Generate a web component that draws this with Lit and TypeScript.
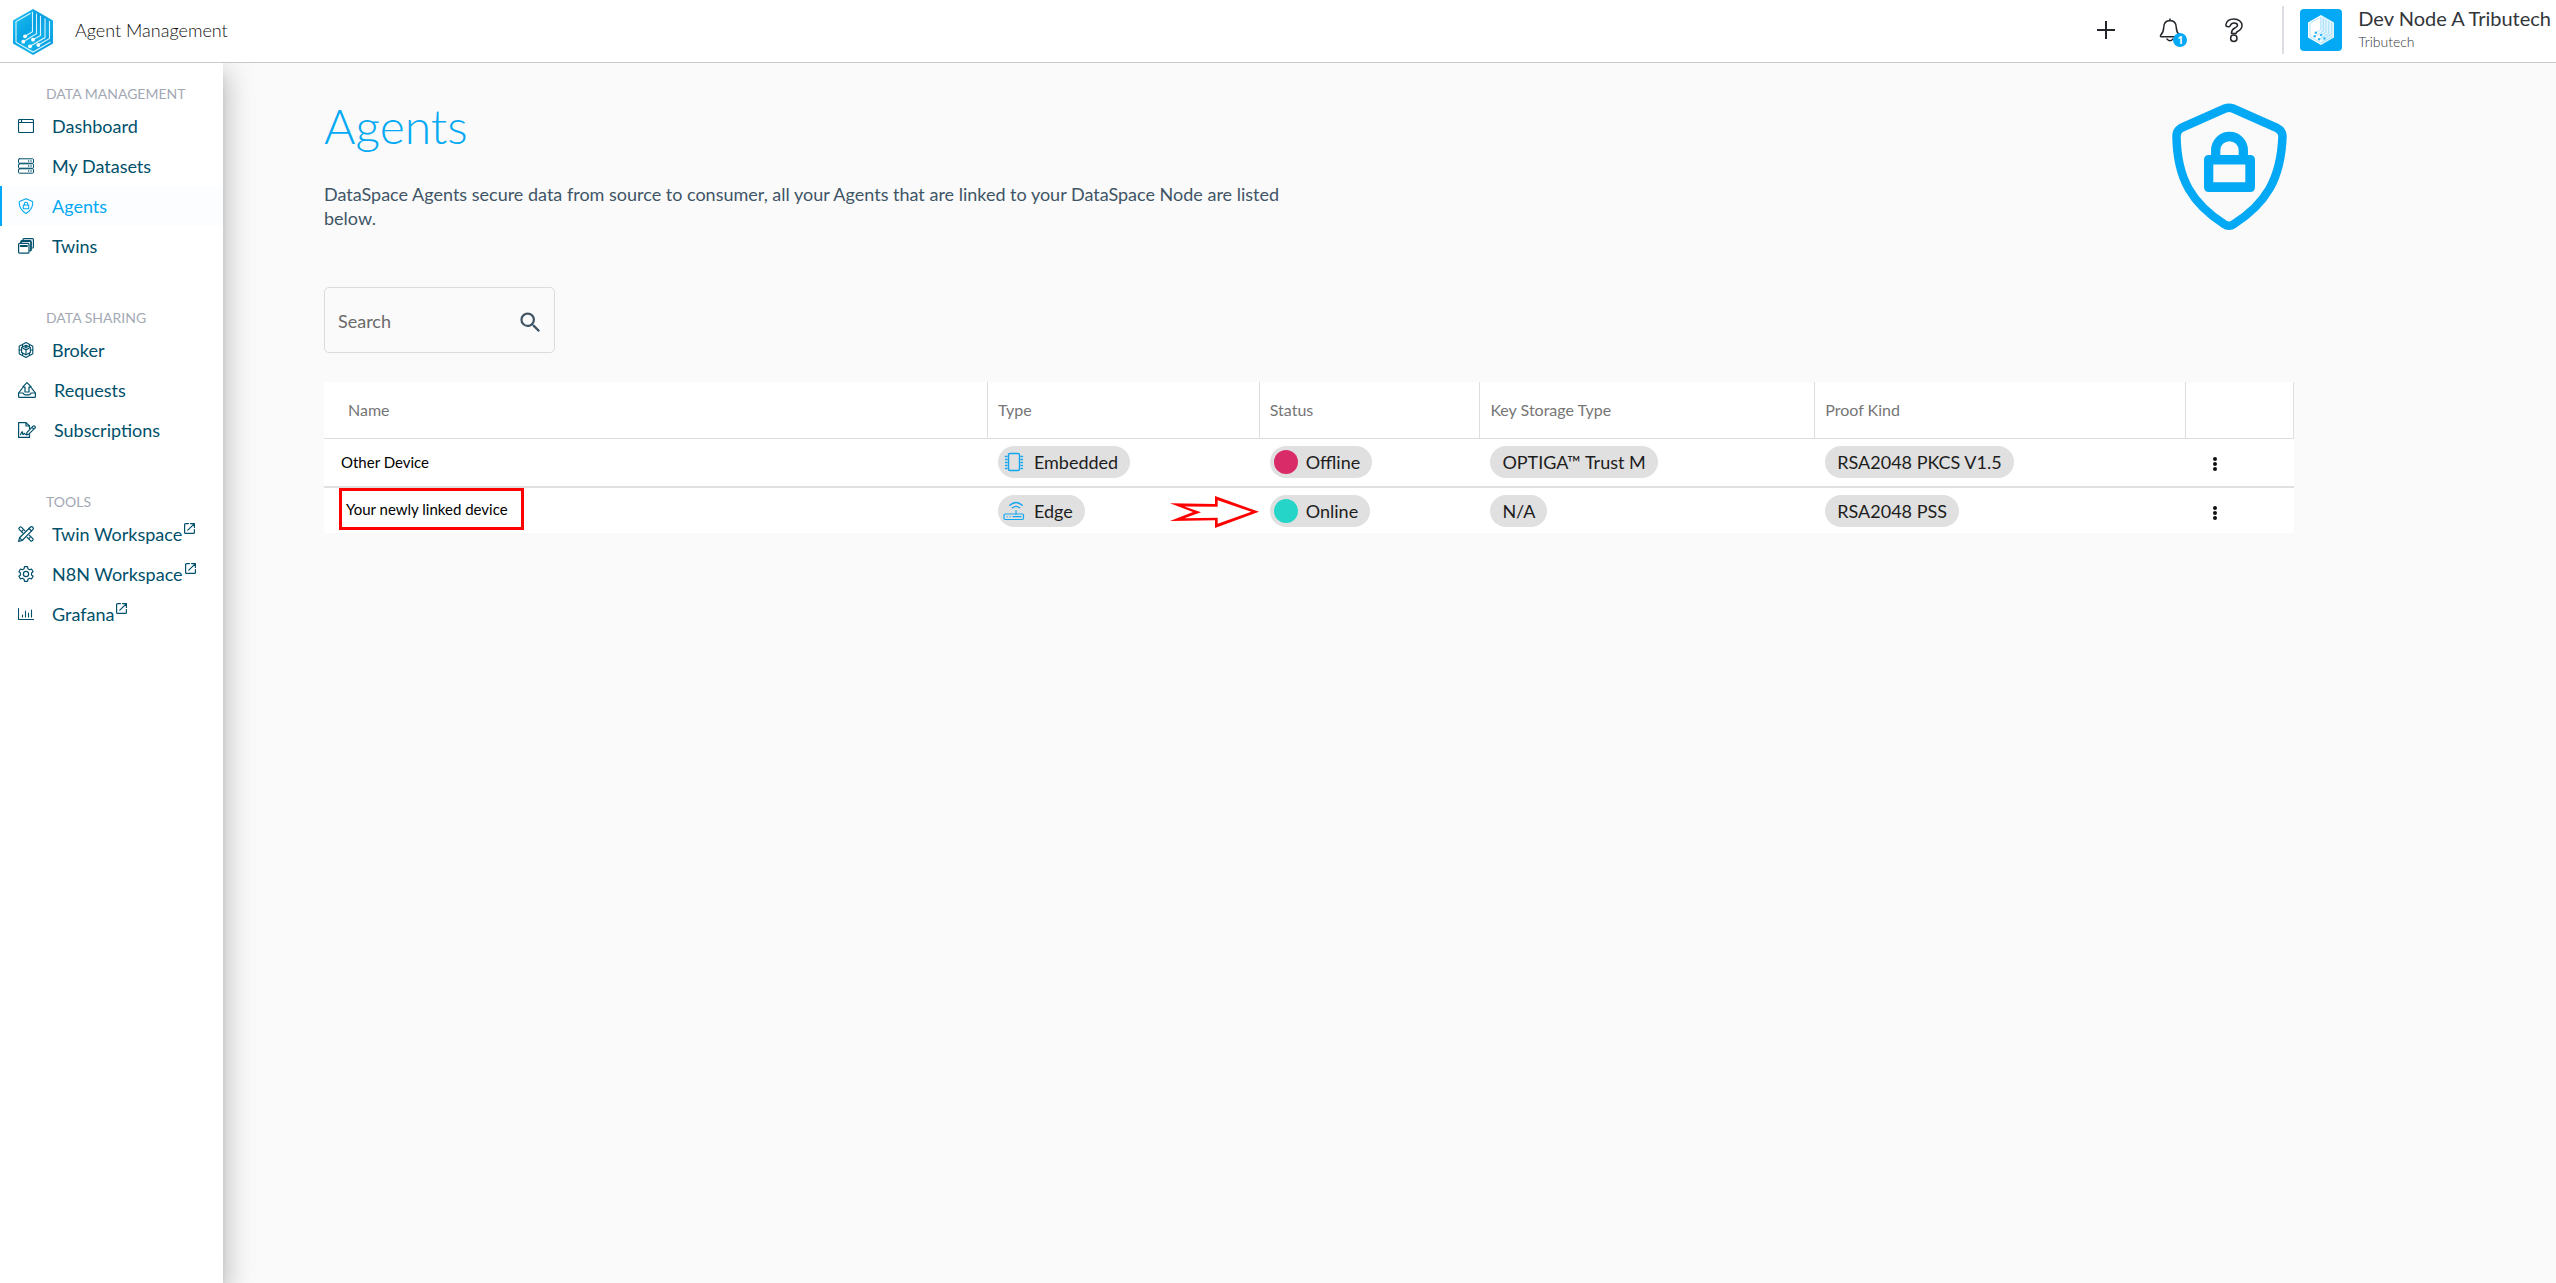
import { LitElement, html, svg, css, nothing, TemplateResult, SVGTemplateResult } from 'lit';
import { customElement, property } from 'lit/decorators.js';
import { classMap } from 'lit/directives/class-map.js';

/* ---------- icons ---------- */

const stroked = (w: number, h: number, body: SVGTemplateResult, sw = 1) => html`
  <svg width=${w} height=${h} viewBox="0 0 ${w} ${h}" fill="none" stroke="currentColor"
    stroke-width=${sw} stroke-linecap="round" stroke-linejoin="round" aria-hidden="true">${body}</svg>`;

const icons: Record<string, TemplateResult> = {
  dashboard: stroked(16, 16, svg`
    <rect x="0.5" y="1.5" width="15" height="13" rx="1"></rect>
    <path d="M0.5 4.5H15.5M3.5 2V4.5"></path>`, 1.2),
  datasets: stroked(16, 16, svg`
    <rect x="0.5" y="0.8" width="15" height="4.4" rx="0.8"></rect>
    <rect x="0.5" y="5.8" width="15" height="4.4" rx="0.8"></rect>
    <rect x="0.5" y="10.8" width="15" height="4.4" rx="0.8"></rect>
    <path d="M10.6 3h.1M13 3h.1M10.6 8h.1M13 8h.1M10.6 13h.1M13 13h.1" stroke-width="1.4"></path>`),
  agents: stroked(16, 16, svg`
    <path d="M8 .8L14 3.3Q14.8 3.7 14.8 4.6C14.7 9.6 12.5 13 8 15.4C3.5 13 1.3 9.6 1.2 4.6Q1.2 3.7 2 3.3Z"></path>
    <rect x="5.3" y="7" width="5.4" height="3.8" rx=".4"></rect>
    <path d="M6.3 7V6A1.7 1.7 0 0 1 9.7 6V7"></path>`, 1.1),
  twins: stroked(16, 16, svg`
    <path d="M5 2.5V1.6Q5 .6 6 .6H14.4Q15.4 .6 15.4 1.6V9Q15.4 10 14.4 10"></path>
    <path d="M3 4.6V4Q3 3 4 3H12Q13 3 13 4V11.5Q13 12.5 12.3 12.5" stroke-width="1.8"></path>
    <rect x=".6" y="5.4" width="10.4" height="9.8" rx="1"></rect>
    <path d="M2.6 8H9" stroke-width="1.8"></path>`, 1.2),
  broker: stroked(16, 16, svg`
    <path d="M8 .6L14.8 4.3V11.7L8 15.4L1.2 11.7V4.3Z"></path>
    <path d="M8 3.2L12.4 5.6V10.4L8 12.8L3.6 10.4V5.6Z"></path>
    <path d="M8 12.6V8L5 6.2M8 8L11 6.2M1.2 8H3.6M12.4 8H14.8M4.6 2.6V5M11.4 2.6V5M4.6 11V13.4M11.4 11V13.4"></path>
    <circle cx="8" cy="5" r="1"></circle>`, 1.1),
  requests: stroked(18, 16, svg`
    <path d="M9 .6L13.4 5.2H11V10H7V5.2H4.6Z"></path>
    <path d="M4.2 6.4L.6 11V14.4Q.6 15.4 1.6 15.4H16.4Q17.4 15.4 17.4 14.4V11L13.8 6.4"></path>
    <path d="M.8 11H5Q5.8 12.8 7 12.8H11Q12.2 12.8 13 11H17.2"></path>`, 1.2),
  subscriptions: stroked(18, 16, svg`
    <path d="M11.5 12.5V15.4H.6V.6H8L11.5 4V6.5"></path>
    <path d="M8 .8V4H11.3"></path>
    <path d="M2.6 12.6Q4 9 4.6 10Q4.4 12.8 5.4 12.4L6.4 11.4L7.4 12.4"></path>
    <path d="M8.4 12.8L9 10.4L15 4.2Q16 3.4 17 4.4Q17.8 5.4 16.8 6.2L10.8 12.2Z M14 5.3L15.9 7.2"></path>`, 1.2),
  tools: stroked(16, 16, svg`
    <path d="M.6 15.4L1.5 11.8L12.3 1.2Q13.5 .2 14.8 1.3Q15.9 2.6 14.8 3.7L4.2 14.5Z"></path>
    <path d="M1.6 11.8L4.2 14.4M11 2.5L13.5 5"></path>
    <path d="M6.8 4.7L3.3 1.2Q2.6 .5 1.9 1.2L1.2 1.9Q.5 2.6 1.2 3.3L4.7 6.8M11.3 9.2L14.8 12.7Q15.5 13.4 14.8 14.1L14.1 14.8Q13.4 15.5 12.7 14.8L9.2 11.3"></path>
    <path d="M3.7 5.5L5 4.2M10.8 12.6L12.2 11.2"></path>`, 1.2),
  gear: stroked(16, 16, svg`
    <circle cx="8" cy="8" r="2.6"></circle>
    <path d="M6.5 .7H9.5L9.9 2.7L11.6 3.7L13.5 3L15.1 5.7L13.5 7V9L15.1 10.3L13.5 13L11.6 12.3L9.9 13.3L9.5 15.3H6.5L6.1 13.3L4.4 12.3L2.5 13L.9 10.3L2.5 9V7L.9 5.7L2.5 3L4.4 3.7L6.1 2.7Z"></path>`, 1.2),
  chart: stroked(16, 16, svg`
    <path d="M.5 2.5V13.5H15.5M4.5 11V9M7.5 11V5M10.5 11V7M13.5 11V4"></path>`, 1.1),
  external: stroked(11, 11, svg`
    <path d="M4.5 .6H1.6Q.6 .6 .6 1.6V9.4Q.6 10.4 1.6 10.4H9.4Q10.4 10.4 10.4 9.4V6.5"></path>
    <path d="M6.5 .6H10.4V4.5M10.2 .8L3.8 7.2"></path>`, 1.2),
  plus: stroked(20, 20, svg`<path d="M10 1V19M1 10H19" stroke-linecap="butt"></path>`, 2),
  bell: stroked(22, 24, svg`
    <path d="M11 1V2.6M11 2.6C6.5 2.8 4.8 6 4.7 9.5C4.6 13.5 3.5 15.3 1.8 17Q.8 18.6 2.4 18.8H19.6Q21.2 18.6 20.2 17C18.5 15.3 17.4 13.5 17.3 9.5C17.2 6 15.5 2.8 11 2.6"></path>
    <path d="M8 21Q11 24.6 14 21"></path>`, 1.5),
  help: stroked(18, 25, svg`
    <path d="M2 8.6Q.6 8.2 .9 6.6C1.6 3.2 4.8 1 8.8 1C13.6 1 17 3.8 17 7.6C17 11 14.8 12.4 12.6 13.5Q11.2 14.2 11.1 15.4H6.5C6.4 12.6 7.4 11.2 9.8 10C11.6 9.1 12.5 8.7 12.5 7.5C12.5 6 11 5 9 5C7 5 6 6 5.5 7.3Q4.9 9 3.4 8.8Z"></path>
    <circle cx="8.8" cy="20.3" r="3.2"></circle>`, 1.5),
  search: html`<svg width="27" height="27" viewBox="0 0 24 24" fill="currentColor" aria-hidden="true">
    <path d="M15.5 14h-.79l-.28-.27A6.471 6.471 0 0 0 16 9.5 6.5 6.5 0 1 0 9.5 16c1.61 0 3.09-.59 4.23-1.57l.27.28v.79l5 4.99L20.49 19l-4.99-5zm-6 0C7.01 14 5 11.99 5 9.5S7.01 5 9.5 5 14 7.01 14 9.5 11.99 14 9.5 14z"></path></svg>`,
  more: html`<svg width="4" height="16" viewBox="0 0 4 16" fill="currentColor" aria-hidden="true">
    <circle cx="2" cy="3" r="2"></circle><circle cx="2" cy="8" r="2"></circle><circle cx="2" cy="13" r="2"></circle></svg>`,
  embedded: stroked(24, 24, svg`
    <rect x="6.5" y="3.5" width="11" height="17" rx="1.5"></rect>
    <path d="M3.5 6.5H5M3.5 9.5H5M3.5 12.5H5M3.5 15.5H5M3.5 18.5H5M19 6.5H20.5M19 9.5H20.5M19 12.5H20.5M19 15.5H20.5M19 18.5H20.5"></path>`, 1.4),
  edge: stroked(24, 24, svg`
    <rect x="2" y="15" width="19.5" height="5.5" rx="1.2"></rect>
    <path d="M14 15V11.5M5 17.7h.1M8 17.7h.1M11 17.7H19"></path>
    <path d="M7.8 6.2Q14 .8 20.2 6.2M10.4 8.8Q14 5.9 17.6 8.8" stroke-width="1.4"></path>`, 1.2),
  shield: html`<svg width="128" height="128" viewBox="0 0 128 128" fill="none" stroke="currentColor" aria-hidden="true">
    <path stroke-width="8.5" stroke-linejoin="round" d="M60 5.5Q64 3.8 68 5.5L112 25Q117.5 28 117.5 33C116 77 100 101 69 121Q64 124.5 59 121C28 101 12 77 11.5 33Q11.5 28 16 25Z"></path>
    <path stroke-width="9.3" d="M50.7 54V47.3A13.7 13.7 0 0 1 78.3 47.3V54"></path>
    <path stroke="none" fill="currentColor" fill-rule="evenodd" d="M44 52H85Q90 52 90 57V84Q90 89 85 89H44Q39 89 39 84V57Q39 52 44 52ZM48.3 61.5V79.2H80.3V61.5Z"></path></svg>`,
};

const cubeLines = svg`
  <path d="M17.5 4.2L3 12.6V33.2L20 43L37.6 33M19.5 2.8V22.8L12 27.3M23.5 4.5V24.6L10.3 32.7M27.5 6.8V26.4L20 30.7M32 9.4V28.6L17 37.3M36.5 12V29.5L25.3 36"></path>`;
const cubeDots = svg`
  <circle cx="12" cy="27.3" r="1.9"></circle><circle cx="10.3" cy="32.7" r="1.9"></circle>
  <circle cx="20" cy="30.7" r="1.9"></circle><circle cx="17" cy="37.3" r="1.9"></circle>
  <circle cx="25.3" cy="36" r="1.9"></circle>`;
const cube = (w: number, h: number, body: string, ink: string, dots: string, edge: string) => html`
  <svg width=${w} height=${h} viewBox="0 0 40 46" aria-hidden="true">
    <defs><linearGradient id="cube-fill" x1="0" y1="0" x2="1" y2="1">
      <stop offset="0" stop-color="#1fc4f2"></stop><stop offset=".4" stop-color="#08a5e6"></stop>
      <stop offset=".65" stop-color="#13b8ee"></stop><stop offset="1" stop-color="#0795dc"></stop>
    </linearGradient></defs>
    <path d="M20 0L40 11.5V34.5L20 46L0 34.5V11.5Z" fill=${body}></path>
    <path d="M20 0L40 11.5V34.5L20 46Z" fill=${edge}></path>
    <g fill="none" stroke=${ink} stroke-width="1.1" stroke-opacity=".85">${cubeLines}</g>
    <g fill=${dots}>${cubeDots}</g>
  </svg>`;

/* ---------- navigation ---------- */

interface NavItem { label: string; icon: string; active?: boolean; external?: boolean }
const sections: { title: string; items: NavItem[] }[] = [
  { title: 'DATA MANAGEMENT', items: [
    { label: 'Dashboard', icon: 'dashboard' },
    { label: 'My Datasets', icon: 'datasets' },
    { label: 'Agents', icon: 'agents', active: true },
    { label: 'Twins', icon: 'twins' },
  ] },
  { title: 'DATA SHARING', items: [
    { label: 'Broker', icon: 'broker' },
    { label: 'Requests', icon: 'requests' },
    { label: 'Subscriptions', icon: 'subscriptions' },
  ] },
  { title: 'TOOLS', items: [
    { label: 'Twin Workspace', icon: 'tools', external: true },
    { label: 'N8N Workspace', icon: 'gear', external: true },
    { label: 'Grafana', icon: 'chart', external: true },
  ] },
];

@customElement('side-nav')
export class SideNav extends LitElement {
  static styles = css`
    :host {
      display: block;
      background: #fff;
      box-shadow: 0 8px 10px -5px rgba(0, 0, 0, 0.2), 0 16px 24px 2px rgba(0, 0, 0, 0.14),
        0 6px 30px 5px rgba(0, 0, 0, 0.12);
    }
    .nav { display: flex; flex-direction: column; gap: 40px; padding-top: 19px; }
    .title {
      margin: 0; padding-left: 46px;
      font-size: 14px; font-weight: 400; line-height: 24px; color: #a3a9b4;
    }
    .list { margin: 0; padding: 0; list-style: none; }
    .item {
      display: flex; align-items: center; height: 40px; padding-left: 18px;
      font-size: 18px; color: #00506b; text-decoration: none;
    }
    .icon { display: flex; margin-right: 18px; }
    .active {
      padding-left: 16px; border-left: 2px solid #03a9f4;
      background: #fbfdff; color: #03a9f4;
    }
    .external { display: flex; align-self: flex-start; padding: 9px 0 0 2px; }
  `;
  render() {
    return html`<nav class="nav" aria-label="Main">
      ${sections.map((s) => html`<section>
        <h2 class="title">${s.title}</h2>
        <ul class="list">
          ${s.items.map((i) => html`<li>
            <a class=${classMap({ item: true, active: !!i.active })} href="#"
              aria-current=${i.active ? 'page' : nothing}>
              <span class="icon">${icons[i.icon]}</span>${i.label}
              ${i.external ? html`<span class="external">${icons.external}</span>` : nothing}
            </a></li>`)}
        </ul>
      </section>`)}
    </nav>`;
  }
}

/* ---------- header ---------- */

@customElement('top-bar')
export class TopBar extends LitElement {
  static styles = css`
    :host { display: block; background: #fff; border-bottom: 1px solid #c6c8ca; }
    .bar { display: flex; align-items: center; height: 62px; padding: 0 5px 0 13px; }
    .logo { display: flex; padding-top: 2px; }
    .title { margin: 0 auto 0 22px; padding-bottom: 2px; font-size: 18px; font-weight: 300; color: #111; }
    .side { display: flex; align-items: center; height: 48px; padding-bottom: 2px; }
    .action {
      position: relative; display: flex; align-items: center; justify-content: center;
      width: 40px; height: 40px; margin-right: 24px; padding: 0;
      border: 0; background: none; color: #23272b;
    }
    .badge {
      position: absolute; right: 3px; bottom: 3px; width: 14px; height: 14px;
      border-radius: 50%; background: #03a9f4; color: #fff;
      font: 700 10px/14px 'Open Sans', sans-serif; text-align: center;
    }
    .divider { width: 2px; height: 48px; margin: 0 16px 0 4px; background: #dddee5; }
    .avatar {
      display: flex; align-items: center; justify-content: center;
      width: 42px; height: 42px; margin-right: 16px; border-radius: 4px; background: #03a9f4;
    }
    .name { font-size: 20px; line-height: 24px; color: #32363a; }
    .org { font-size: 14px; font-weight: 300; line-height: 24px; color: #32363a; }
  `;
  render() {
    return html`<header class="bar">
      <span class="logo">${cube(40, 46, 'url(#cube-fill)', '#fff', '#fff', 'rgba(0,120,200,.15)')}</span>
      <span class="title">Agent Management</span>
      <div class="side">
        <button class="action" aria-label="Add">${icons.plus}</button>
        <button class="action" aria-label="Notifications">${icons.bell}<span class="badge">1</span></button>
        <button class="action" aria-label="Help">${icons.help}</button>
        <span class="divider"></span>
        <span class="avatar">${cube(26, 30, '#fff', '#7fd0f7', '#2fb6f5', 'rgba(3,169,244,.12)')}</span>
        <div>
          <div class="name">Dev Node A Tributech</div>
          <div class="org">Tributech</div>
        </div>
      </div>
    </header>`;
  }
}

/* ---------- table ---------- */

interface Agent {
  name: string; type: string; icon: string; online: boolean; storage: string; proof: string; marked?: boolean;
}
const agents: Agent[] = [
  { name: 'Other Device', type: 'Embedded', icon: 'embedded', online: false, storage: 'OPTIGA™ Trust M', proof: 'RSA2048 PKCS V1.5' },
  { name: 'Your newly linked device', type: 'Edge', icon: 'edge', online: true, storage: 'N/A', proof: 'RSA2048 PSS', marked: true },
];

@customElement('agent-table')
export class AgentTable extends LitElement {
  @property({ attribute: false }) rows: Agent[] = [];
  static styles = css`
    :host { display: block; }
    .table {
      width: 100%; table-layout: fixed; border-spacing: 0; background: #fff; color: #1d1d1d;
    }
    .c-name { width: 33.7%; }
    .c-type { width: 13.8%; }
    .c-status { width: 11.2%; }
    .c-key { width: 17%; }
    .c-proof { width: 18.8%; }
    .c-menu { width: 5.5%; }
    .head {
      box-sizing: border-box; height: 57px; padding: 0 0 2px 10px; text-align: left;
      font-size: 16px; font-weight: 400; color: #767676;
      border-right: 1px solid #dedede; border-bottom: 1px solid #dedede;
    }
    .head:first-child { padding-left: 24px; }
    .cell { position: relative; padding: 7px 0 6px 10px; vertical-align: top; font-size: 18px; }
    .row:not(:last-child) .cell { padding-bottom: 8px; border-bottom: 2px solid #e0e0e0; }
    .row .cell:first-child { padding: 0; font-size: 15px; color: #000; }
    .device { display: flex; align-items: center; height: 46px; padding-left: 17px; }
    .marked {
      box-sizing: border-box; width: 185px; height: 42px; margin-left: 15px;
      padding-left: 4px; border: 3px solid #f00;
    }
    .chip {
      display: inline-flex; align-items: center; height: 32px; padding: 0 12px;
      border-radius: 16px; background: #e0e0e0; line-height: 32px; vertical-align: top;
    }
    .with-mark { padding-left: 4px; }
    .mark { display: flex; width: 24px; height: 24px; margin-right: 8px; border-radius: 50%; color: #12a5f0; }
    .offline { background: #d92b68; }
    .online { background: #25d6c8; }
    .arrow { position: absolute; top: 8px; right: 1px; }
    .menu {
      display: flex; align-items: center; justify-content: center;
      width: 38px; height: 32px; padding: 4px 0 0; border: 0; background: none; color: #111;
    }
  `;
  render() {
    return html`<table class="table">
      <thead><tr>
        <th class="head c-name" scope="col">Name</th>
        <th class="head c-type" scope="col">Type</th>
        <th class="head c-status" scope="col">Status</th>
        <th class="head c-key" scope="col">Key Storage Type</th>
        <th class="head c-proof" scope="col">Proof Kind</th>
        <th class="head c-menu" scope="col"></th>
      </tr></thead>
      <tbody>${this.rows.map((r) => html`<tr class="row">
        <td class="cell"><div class=${classMap({ device: true, marked: !!r.marked })}>${r.name}</div></td>
        <td class="cell">
          <span class="chip with-mark"><span class="mark">${icons[r.icon]}</span>${r.type}</span>
          ${r.marked ? html`<svg class="arrow" width="89" height="32" viewBox="0 0 267 96" aria-hidden="true">
            <path fill="#f00" d="M0 22L135 24V0L267 47.5L135 96V73L0 75L69 48Z"></path>
            <path fill="#fff" d="M43 31.5L143 32V13L244 47.5L143 83V65L43 66.5L93 48.5Z"></path></svg>` : nothing}
        </td>
        <td class="cell"><span class="chip with-mark"><span
          class=${classMap({ mark: true, online: r.online, offline: !r.online })}></span>${r.online ? 'Online' : 'Offline'}</span></td>
        <td class="cell"><span class="chip">${r.storage}</span></td>
        <td class="cell"><span class="chip">${r.proof}</span></td>
        <td class="cell"><button class="menu" aria-label="Actions for ${r.name}">${icons.more}</button></td>
      </tr>`)}</tbody>
    </table>`;
  }
}

/* ---------- page ---------- */

@customElement('app-root')
export class AppRoot extends LitElement {
  static styles = css`
    :host {
      display: flex; flex-direction: column; min-height: 100vh;
      background: #fafafa; font-family: Lato, 'Liberation Sans', sans-serif; color: #3f5566;
    }
    .top { position: relative; z-index: 2; }
    .body { display: flex; flex: 1; overflow: hidden; }
    .side { flex: 0 0 223px; }
    .main { flex: 1; min-width: 0; padding: 34px 262px 40px 101px; }
    .hero { display: flex; justify-content: space-between; align-items: flex-start; }
    .intro { width: 50%; }
    .heading { margin: 0 0 27px; font-size: 48px; font-weight: 300; line-height: 58px; color: #03a9f4; }
    .text { margin: 0; font-size: 18px; line-height: 24px; }
    .shield { display: flex; padding: 6px 1px 0 0; color: #03a9f4; }
    .search {
      box-sizing: border-box; display: flex; align-items: center;
      width: 231px; height: 66px; margin: 56px 0 29px; padding: 2px 10px 0 13px;
      border: 1px solid #dcdcdc; border-radius: 5px;
    }
    .input {
      flex: 1; min-width: 0; padding: 0; border: 0; outline: 0; background: none;
      font: inherit; font-size: 18px; color: inherit;
    }
    .input::placeholder { color: #6a6a6a; opacity: 1; }
    .go { display: flex; padding: 2px 0 0; border: 0; background: none; color: #3f5566; }
  `;
  render() {
    return html`
      <top-bar class="top"></top-bar>
      <div class="body">
        <side-nav class="side"></side-nav>
        <main class="main">
          <div class="hero">
            <div class="intro">
              <h1 class="heading">Agents</h1>
              <p class="text">DataSpace Agents secure data from source to consumer, all your Agents that are linked to your DataSpace Node are listed below.</p>
            </div>
            <span class="shield">${icons.shield}</span>
          </div>
          <form class="search" role="search">
            <input class="input" type="text" placeholder="Search" aria-label="Search" />
            <button class="go" type="button" aria-label="Search agents">${icons.search}</button>
          </form>
          <agent-table .rows=${agents}></agent-table>
        </main>
      </div>`;
  }
}
